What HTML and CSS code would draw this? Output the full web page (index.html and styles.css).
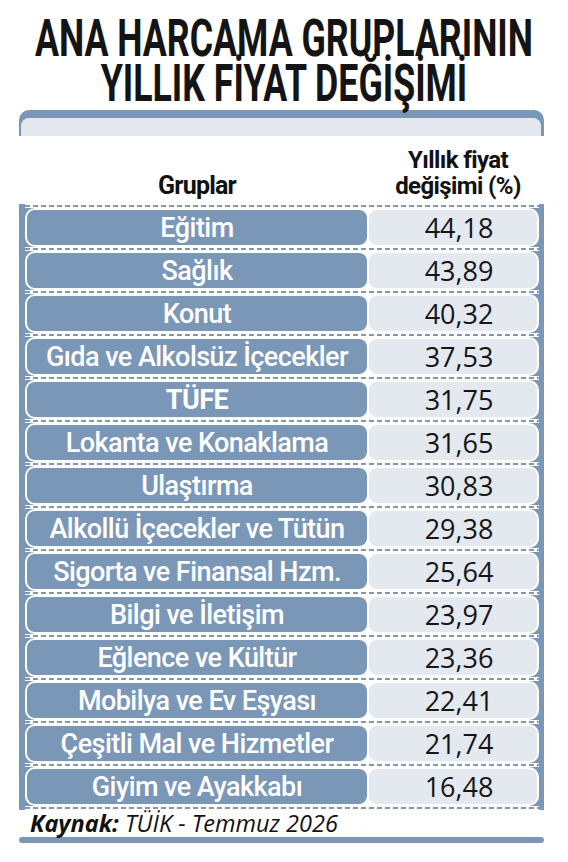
FILE: index.html
```html
<!DOCTYPE html>
<html lang="tr">
<head>
    <meta charset="UTF-8">
    <meta name="viewport" content="width=device-width, initial-scale=1.0">
    <title>Ana Harcama Gruplarının Yıllık Fiyat Değişimi</title>
    <link rel="stylesheet" href="styles.css">
</head>
<body>
    <h1 class="title">
        <span>ANA HARCAMA GRUPLARININ</span>
        <span>YILLIK FİYAT DEĞİŞİMİ</span>
    </h1>

    <div class="board">
        <div class="cap"><div class="cap-inner"></div></div>

        <div class="head">
            <div class="head-group">Gruplar</div>
            <div class="head-value">Yıllık fiyat<br>değişimi (%)</div>
        </div>

        <div class="panel">
            <div class="rule"></div>
            <div class="row"><div class="name">Eğitim</div><div class="value">44,18</div></div>
            <div class="rule"></div>
            <div class="row"><div class="name">Sağlık</div><div class="value">43,89</div></div>
            <div class="rule"></div>
            <div class="row"><div class="name">Konut</div><div class="value">40,32</div></div>
            <div class="rule"></div>
            <div class="row"><div class="name">Gıda ve Alkolsüz İçecekler</div><div class="value">37,53</div></div>
            <div class="rule"></div>
            <div class="row"><div class="name strong">TÜFE</div><div class="value">31,75</div></div>
            <div class="rule"></div>
            <div class="row"><div class="name">Lokanta ve Konaklama</div><div class="value">31,65</div></div>
            <div class="rule"></div>
            <div class="row"><div class="name">Ulaştırma</div><div class="value">30,83</div></div>
            <div class="rule"></div>
            <div class="row"><div class="name">Alkollü İçecekler ve Tütün</div><div class="value">29,38</div></div>
            <div class="rule"></div>
            <div class="row"><div class="name">Sigorta ve Finansal Hzm.</div><div class="value">25,64</div></div>
            <div class="rule"></div>
            <div class="row"><div class="name">Bilgi ve İletişim</div><div class="value">23,97</div></div>
            <div class="rule"></div>
            <div class="row"><div class="name">Eğlence ve Kültür</div><div class="value">23,36</div></div>
            <div class="rule"></div>
            <div class="row"><div class="name">Mobilya ve Ev Eşyası</div><div class="value">22,41</div></div>
            <div class="rule"></div>
            <div class="row"><div class="name">Çeşitli Mal ve Hizmetler</div><div class="value">21,74</div></div>
            <div class="rule"></div>
            <div class="row"><div class="name">Giyim ve Ayakkabı</div><div class="value">16,48</div></div>
            <div class="rule"></div>
        </div>

        <p class="source"><b>Kaynak:</b> TÜİK - Temmuz 2026</p>
        <div class="foot-bar"></div>
    </div>
</body>
</html>
```

FILE: styles.css
```css
body {
    margin: 0;
    background: #fff;
    color: #111;
    font-family: 'Roboto', sans-serif;
}
.title {
    display: flex;
    flex-direction: column;
    align-items: center;
    margin: 16px 0 0;
    height: 94px;
    font-size: 51px;
    line-height: 45px;
    font-weight: 700;
    white-space: nowrap;
    color: #141414;
    transform: scaleX(0.7);
}
.board {
    width: 525px;
    margin-left: 19px;
}
.cap {
    background: #7b97b8;
    border-radius: 10px 10px 0 0;
    padding: 8px 3px 0 2px;
}
.cap-inner {
    height: 18px;
    background: #e4e8ee;
    border-radius: 8px 8px 0 0;
}
.head {
    display: grid;
    grid-template-columns: 340px 168px;
    column-gap: 2px;
    align-items: end;
    height: 68px;
    padding: 0 7px 5px 8px;
    box-sizing: border-box;
    font-weight: 700;
    text-align: center;
    color: #111;
}
.head-group {
    font-size: 25px;
    line-height: 26px;
    letter-spacing: -0.8px;
}
.head-value {
    font-size: 24px;
    line-height: 26px;
    letter-spacing: -0.6px;
    padding-left: 10px;
}
.panel {
    background: #7b97b8;
    padding: 0 5px 0 6px;
}
.rule {
    height: 4px;
    background-color: #fff;
    background-image: repeating-linear-gradient(90deg, #8497b0 0 5px, transparent 5px 8px);
    background-size: 100% 2px;
    background-position: 0 1px;
    background-repeat: no-repeat;
}
.row {
    display: grid;
    grid-template-columns: 340px 168px;
    column-gap: 2px;
    padding: 2px;
    background: #fff;
    border-radius: 10px;
}
.name,
.value {
    height: 35px;
    border-radius: 8px;
    display: flex;
    align-items: center;
    justify-content: center;
}
.name {
    background: #7b97b8;
    color: #fff;
    font-size: 27px;
    font-weight: 500;
    letter-spacing: -0.55px;
}
.name.strong {
    font-weight: 700;
}
.value {
    background: #e4e8ef;
    color: #151515;
    font-family: 'Open Sans', sans-serif;
    font-size: 27px;
    padding-left: 12px;
    box-sizing: border-box;
}
.source {
    margin: 0;
    padding-left: 11px;
    font-family: 'Open Sans', sans-serif;
    font-size: 23.5px;
    line-height: 26px;
    font-style: italic;
    color: #111;
}
.foot-bar {
    height: 6px;
    margin-top: 1px;
    background: #7b97b8;
    border-radius: 3px;
}
```
